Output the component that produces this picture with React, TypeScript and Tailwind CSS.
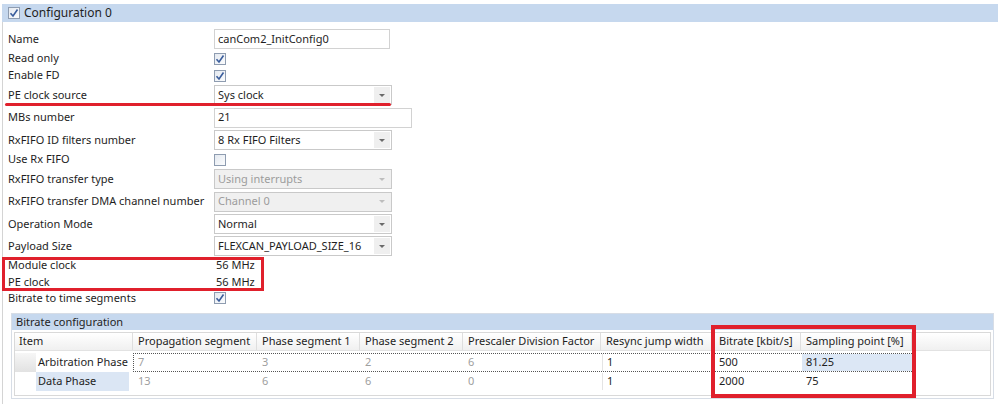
import React from "react";

const Check = ({ checked = true }: { checked?: boolean }) => (
    <div className="w-[12px] h-[12px] border border-[#8e9cb0] bg-gradient-to-br from-[#e4e9f0] to-[#fbfcfd] flex items-center justify-center">
        {checked && (
            <svg width="10" height="10" viewBox="0 0 10 10">
                <path d="M1.5 5.2 L4 8 L8.5 1.5" fill="none" stroke="#3a5d9c" strokeWidth="1.6" />
            </svg>
        )}
    </div>
);

const Select = ({ value, disabled = false }: { value: string; disabled?: boolean }) => (
    <div className={`w-[178px] h-[20px] border border-[#c9c9c9] flex items-center ${disabled ? "bg-[#f0f0f0] text-[#9c9c9c]" : "bg-white"}`}>
        <span className="flex-1 pl-[3px] truncate">{value}</span>
        <div className={`w-[16px] h-[16px] mr-[1px] flex items-center justify-center ${disabled ? "bg-[#f0f0f0]" : "bg-[#efefef]"}`}>
            <svg width="6" height="3" viewBox="0 0 6 3">
                <path d="M0 0 H6 L3 3 Z" fill={disabled ? "#bdbdbd" : "#6a6a6a"} />
            </svg>
        </div>
    </div>
);

const Input = ({ value, width }: { value: string; width: string }) => (
    <div className={`${width} h-[20px] border border-[#d2d2d2] bg-white flex items-center pl-[3px]`}>{value}</div>
);

type Row = { label: string; h: string; value: React.ReactNode };

const rows: Row[] = [
    { label: "Name", h: "h-[22px]", value: <Input value="canCom2_InitConfig0" width="w-[176px]" /> },
    { label: "Read only", h: "h-[17px]", value: <Check /> },
    { label: "Enable FD", h: "h-[17px]", value: <Check /> },
    { label: "PE clock source", h: "h-[22px]", value: <Select value="Sys clock" /> },
    { label: "MBs number", h: "h-[23px]", value: <Input value="21" width="w-[198px]" /> },
    { label: "RxFIFO ID filters number", h: "h-[22px]", value: <Select value="8 Rx FIFO Filters" /> },
    { label: "Use Rx FIFO", h: "h-[17px]", value: <Check checked={false} /> },
    { label: "RxFIFO transfer type", h: "h-[22px]", value: <Select value="Using interrupts" disabled /> },
    { label: "RxFIFO transfer DMA channel number", h: "h-[23px]", value: <Select value="Channel 0" disabled /> },
    { label: "Operation Mode", h: "h-[22px]", value: <Select value="Normal" /> },
    { label: "Payload Size", h: "h-[22px]", value: <Select value="FLEXCAN_PAYLOAD_SIZE_16" /> },
    { label: "Module clock", h: "h-[17px]", value: <span className="pl-[2px]">56 MHz</span> },
    { label: "PE clock", h: "h-[16px]", value: <span className="pl-[2px]">56 MHz</span> },
    { label: "Bitrate to time segments", h: "h-[16px]", value: <Check /> },
];

const cols = [
    { name: "Item", w: "w-[118px]" },
    { name: "Propagation segment", w: "w-[124px]" },
    { name: "Phase segment 1", w: "w-[103px]" },
    { name: "Phase segment 2", w: "w-[103px]" },
    { name: "Prescaler Division Factor", w: "w-[138px]" },
    { name: "Resync jump width", w: "w-[113px]" },
    { name: "Bitrate [kbit/s]", w: "w-[87px]" },
    { name: "Sampling point [%]", w: "w-[111px]" },
];

const data = [
    ["7", "3", "2", "6", "1", "500", "81.25"],
    ["13", "6", "6", "0", "1", "2000", "75"],
];

export default function App() {
    return (
        <div className="relative w-[998px] h-[404px] bg-white overflow-hidden text-[11px] text-[#1e1e1e]" style={{ fontFamily: '"Noto Sans", sans-serif' }}>
            <div className="pt-[4px] pl-[2px]">
                <div className="h-[18px] bg-[#c6d8ee] flex items-center gap-[4px] pl-[6px] text-[12px]">
                    <Check />
                    <span>Configuration 0</span>
                </div>
                <div className="border-l border-[#d4d4d4] pl-[5px] pt-[6px] h-[382px]">
                    {rows.map((r) => (
                        <div key={r.label} className={`flex items-center ${r.h}`}>
                            <div className="w-[206px] shrink-0">{r.label}</div>
                            <div className="flex items-center">{r.value}</div>
                        </div>
                    ))}

                    <div className="mt-[7px] ml-[3px] w-[983px] border border-[#d7dde6]">
                        <div className="h-[16px] bg-[#c6d8ee] flex items-center pl-[4px]">Bitrate configuration</div>
                        <div className="m-[2px] mt-[2px] border border-[#d9d9d9] h-[64px]">
                            <div className="flex h-[18px] bg-gradient-to-b from-white to-[#f0f0f0] border-b border-[#e2e2e2]">
                                {cols.map((c, i) => (
                                    <div key={c.name} className={`${c.w} flex items-center ${i === 0 ? "pl-[4px]" : "pl-[5px]"} border-r border-[#dedede]`}>
                                        {c.name}
                                    </div>
                                ))}
                            </div>
                            {data.map((row, ri) => (
                                <div key={ri} className={`flex h-[19px] ${ri === 0 ? "mt-[2px]" : ""}`}>
                                    <div className="w-[118px] flex">
                                        <div className={`w-[21px] ${ri === 0 ? "bg-gradient-to-b from-[#f6f6f6] to-[#e2e2e2]" : ""}`} />
                                        <div className={`flex-1 flex items-center pl-[2px] ${ri === 1 ? "bg-[#dbe6f4] mr-[4px]" : ""}`}>
                                            {ri === 0 ? "Arbitration Phase" : "Data Phase"}
                                        </div>
                                    </div>
                                    <div className={`flex ${ri === 0 ? "border border-dotted border-[#555]" : "border border-transparent"}`}>
                                        {row.map((v, ci) => (
                                            <div
                                                key={ci}
                                                className={`${cols[ci + 1].w} flex items-center pl-[4px] ${ci < 4 ? "text-[#a0a0a0]" : ""} ${ri === 0 && ci === 6 ? "bg-[#dce7f5]" : ""} ${ci === 4 ? "border-l border-[#e4e4e4]" : ""}`}
                                            >
                                                {v}
                                            </div>
                                        ))}
                                    </div>
                                </div>
                            ))}
                        </div>
                    </div>
                </div>
            </div>

            {/* red annotation marks */}
            <div className="absolute left-[5px] top-[103px] w-[386px] h-[3px] bg-[#e0202c] rounded-full" />
            <div className="absolute left-[2px] top-[257px] w-[262px] h-[34px] border-[3px] border-[#e0202c]" />
            <div className="absolute left-[711px] top-[325px] w-[205px] h-[73px] border-[4px] border-[#e0202c]" />
        </div>
    );
}
